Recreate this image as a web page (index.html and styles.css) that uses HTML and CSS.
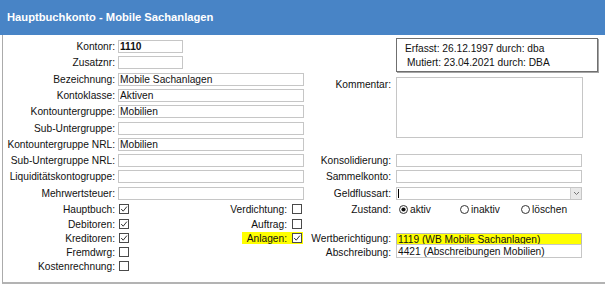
FILE: index.html
```html
<!DOCTYPE html>
<html lang="de">
<head>
    <meta charset="UTF-8">
    <title>Hauptbuchkonto - Mobile Sachanlagen</title>
    <link rel="stylesheet" href="styles.css">
</head>
<body>
    <svg class="defs" width="0" height="0">
        <symbol id="chk" viewBox="0 0 10 10">
            <rect x="0.5" y="0.5" width="9" height="9" fill="#fff" stroke="#4a4a4a"/>
            <polyline points="2.2,5 4.2,7.2 7.9,2.6" fill="none" stroke="#333" stroke-width="1"/>
        </symbol>
        <symbol id="box" viewBox="0 0 10 10">
            <rect x="0.5" y="0.5" width="9" height="9" fill="#fff" stroke="#4a4a4a"/>
        </symbol>
    </svg>

    <div class="title">Hauptbuchkonto - Mobile Sachanlagen</div>

    <div class="panel">
        <div class="form">
            <!-- row 1 -->
            <label class="lbl">Kontonr:</label>
            <input class="fld short bold" type="text" value="1110">
            <div></div>
            <div class="info">
                <div class="l1">Erfasst: 26.12.1997 durch: dba</div>
                <div class="l2">Mutiert: 23.04.2021 durch: DBA</div>
            </div>

            <label class="lbl">Zusatznr:</label>
            <input class="fld short" type="text" value="">
            <div></div>

            <label class="lbl">Bezeichnung:</label>
            <input class="fld" type="text" value="Mobile Sachanlagen">
            <label class="lbl lbl2 top">Kommentar:</label>
            <textarea class="comment"></textarea>

            <label class="lbl">Kontoklasse:</label>
            <input class="fld" type="text" value="Aktiven">

            <label class="lbl">Kontountergruppe:</label>
            <input class="fld" type="text" value="Mobilien">

            <label class="lbl">Sub-Untergruppe:</label>
            <input class="fld" type="text" value="">

            <label class="lbl">Kontountergruppe NRL:</label>
            <input class="fld" type="text" value="Mobilien">
            <div></div>
            <div></div>

            <label class="lbl">Sub-Untergruppe NRL:</label>
            <input class="fld" type="text" value="">
            <label class="lbl lbl2">Konsolidierung:</label>
            <input class="fld" type="text" value="">

            <label class="lbl">Liquiditätskontogruppe:</label>
            <input class="fld" type="text" value="">
            <label class="lbl lbl2">Sammelkonto:</label>
            <input class="fld" type="text" value="">

            <label class="lbl">Mehrwertsteuer:</label>
            <input class="fld" type="text" value="">
            <label class="lbl lbl2">Geldflussart:</label>
            <div class="select">
                <span class="caret"></span>
                <span class="drop">
                    <svg width="7" height="5" viewBox="0 0 7 5"><polyline points="1,1 3.5,3.5 6,1" fill="none" stroke="#777" stroke-width="1"/></svg>
                </span>
            </div>

            <!-- checkbox rows -->
            <label class="lbl">Hauptbuch:</label>
            <div class="chkrow">
                <svg class="cb"><use href="#chk"/></svg>
                <span class="opt">Verdichtung: <svg class="cb"><use href="#box"/></svg></span>
            </div>
            <label class="lbl lbl2">Zustand:</label>
            <div class="radios">
                <span class="radio"><svg width="9" height="9" viewBox="0 0 9 9"><circle cx="4.5" cy="4.5" r="4" fill="#fff" stroke="#333"/><circle cx="4.5" cy="4.5" r="2.1" fill="#111"/></svg>aktiv</span>
                <span class="radio"><svg width="9" height="9" viewBox="0 0 9 9"><circle cx="4.5" cy="4.5" r="4" fill="#fff" stroke="#333"/></svg>inaktiv</span>
                <span class="radio"><svg width="9" height="9" viewBox="0 0 9 9"><circle cx="4.5" cy="4.5" r="4" fill="#fff" stroke="#333"/></svg>löschen</span>
            </div>

            <label class="lbl">Debitoren:</label>
            <div class="chkrow">
                <svg class="cb"><use href="#chk"/></svg>
                <span class="opt">Auftrag: <svg class="cb"><use href="#box"/></svg></span>
            </div>
            <div></div>
            <div></div>

            <label class="lbl">Kreditoren:</label>
            <div class="chkrow">
                <svg class="cb"><use href="#chk"/></svg>
                <span class="opt mark">Anlagen: <svg class="cb"><use href="#chk"/></svg></span>
            </div>
            <label class="lbl lbl2">Wertberichtigung:</label>
            <input class="fld wb" type="text" value="1119 (WB Mobile Sachanlagen)">

            <label class="lbl">Fremdwrg:</label>
            <div class="chkrow">
                <svg class="cb"><use href="#box"/></svg>
            </div>
            <label class="lbl lbl2">Abschreibung:</label>
            <input class="fld ab" type="text" value="4421 (Abschreibungen Mobilien)">

            <label class="lbl">Kostenrechnung:</label>
            <div class="chkrow">
                <svg class="cb"><use href="#box"/></svg>
            </div>
        </div>
    </div>
</body>
</html>
```

FILE: styles.css
```css
body {
    margin: 0;
    font-family: "Liberation Sans", Arial, sans-serif;
    font-size: 10.2px;
    color: #111;
    background: #fff;
}
.defs {
    position: absolute;
}
.title {
    height: 35px;
    line-height: 35px;
    padding-left: 7px;
    background: #4884c6;
    color: #fff;
    font-weight: bold;
    font-size: 11.2px;
}
.panel {
    margin-left: 2px;
    height: 249px;
    box-sizing: border-box;
    padding-top: 3.4px;
    border-left: 1px solid #ababab;
    border-bottom: 2px solid #b3b3b3;
}
.form {
    display: grid;
    grid-template-columns: 115px 187px 91px 209px;
    grid-template-rows: repeat(10, 16.3px) 16px repeat(4, 14px);
}
.lbl {
    align-self: center;
    text-align: right;
    padding-right: 3px;
    white-space: nowrap;
}
.lbl2 {
    padding-right: 5px;
}
.top {
    grid-row: span 4;
    align-self: start;
    padding-top: 8px;
}
.fld {
    align-self: center;
    width: 186px;
    height: 13px;
    box-sizing: border-box;
    margin: 0;
    padding: 0 1px;
    border: 1px solid #c6c6c6;
    font-family: inherit;
    font-size: 10.2px;
    color: #111;
    background: #fff;
    outline: none;
}
.short {
    width: 65px;
}
.bold {
    font-weight: bold;
}
.info {
    grid-row: span 2;
    align-self: start;
    width: 202px;
    height: 34px;
    box-sizing: border-box;
    padding-top: 3px;
    border: 1px solid #6f6f6f;
    box-shadow: 1px 1px 0 #a5a5a5;
    line-height: 14px;
}
.info .l1 {
    padding-left: 8px;
}
.info .l2 {
    padding-left: 10px;
}
.comment {
    grid-row: span 4;
    align-self: start;
    margin: 6px 0 0;
    width: 187px;
    height: 61px;
    box-sizing: border-box;
    border: 1px solid #c6c6c6;
    resize: none;
    font-family: inherit;
}
.select {
    align-self: center;
    display: flex;
    justify-content: space-between;
    width: 186px;
    height: 13px;
    box-sizing: border-box;
    border: 1px solid #c6c6c6;
}
.caret {
    width: 1px;
    height: 9px;
    margin: 1px 0 0 1px;
    background: #000;
}
.drop {
    display: flex;
    align-items: center;
    justify-content: center;
    width: 10px;
    background: #e9e9e9;
    border-left: 1px solid #cfcfcf;
}
.chkrow {
    display: flex;
    align-items: center;
    justify-content: space-between;
}
.cb {
    display: block;
    width: 10px;
    height: 10px;
}
.chkrow > .cb {
    margin-left: 1px;
}
.opt {
    display: flex;
    align-items: center;
    gap: 5px;
    height: 12px;
    margin-right: 2px;
    padding: 0 1px 0 5px;
    white-space: nowrap;
}
.mark {
    background: #ffff00;
}
.radios {
    display: flex;
    align-items: center;
    padding-left: 3px;
}
.radio {
    display: flex;
    align-items: center;
    gap: 2px;
    width: 61px;
}
.wb {
    align-self: end;
    height: 12px;
    background: #ffff00;
    border-color: #b8b8b8;
}
.ab {
    align-self: start;
    height: 14px;
    margin-top: -1px;
}
```
